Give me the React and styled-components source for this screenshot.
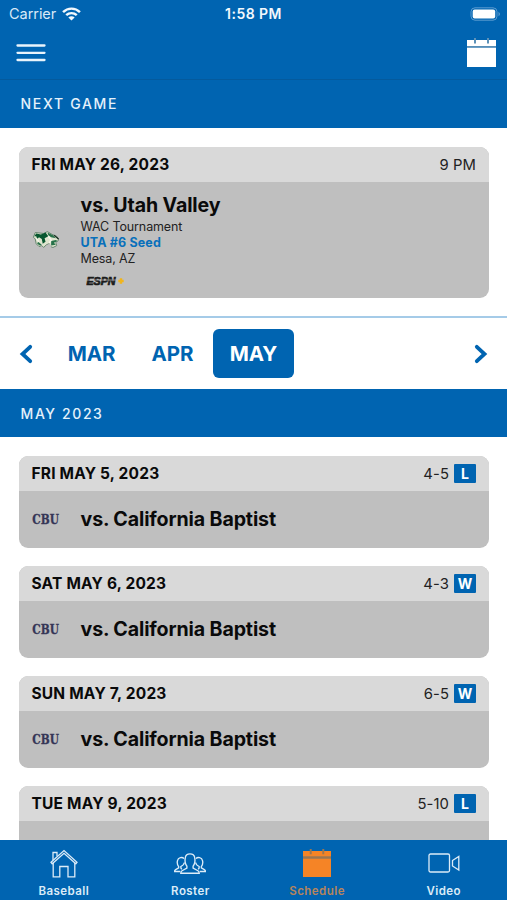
import styled, { createGlobalStyle } from "styled-components";

const GlobalStyle = createGlobalStyle`
  :root {
    --color-primary: #0064b1;
    --color-accent: #f58426;
    --color-head: #d9d9d9;
    --color-body: #bfbfbf;
  }

  * {
    box-sizing: border-box;
  }

  body {
    margin: 0;
    background-color: #fff;
    font-family: Inter, "Liberation Sans", sans-serif;
    color: #0a0a0a;
  }
`;

const Screen = styled.div`
  width: 507px;
  height: 900px;
  display: flex;
  flex-direction: column;
  overflow: hidden;
`;

const StatusBar = styled.div`
  height: 27px;
  flex-shrink: 0;
  display: grid;
  grid-template-columns: 1fr auto 1fr;
  align-items: center;
  padding: 0 6px 0 9px;
  background-color: var(--color-primary);
  color: #fff;
`;

const Carrier = styled.div`
  display: flex;
  align-items: center;
  gap: 5.5px;
  color: #d8e9f7;
  font-size: 14.5px;
  line-height: 27px;
  letter-spacing: -0.05px;
`;

const Clock = styled.div`
  color: #f2f8fd;
  font-size: 14px;
  font-weight: 600;
  letter-spacing: 0.45px;
  margin-right: 3px;
`;

const BatteryIcon = styled.svg`
  justify-self: end;
`;

const NavBar = styled.header`
  height: 53px;
  flex-shrink: 0;
  display: flex;
  justify-content: space-between;
  align-items: flex-start;
  padding: 11px 11px 0 16px;
  background-color: var(--color-primary);
  border-bottom: 1px solid #045a9d;
`;

const MenuIcon = styled.svg`
  margin-top: 5px;
`;

const SectionTitle = styled.h2`
  height: 48px;
  flex-shrink: 0;
  margin: 0;
  padding-left: 20.5px;
  background-color: var(--color-primary);
  color: #e4f1fb;
  font-size: 14px;
  font-weight: 500;
  line-height: ${(props) => (props.$month ? "49px" : "48px")};
  letter-spacing: ${(props) => (props.$month ? "1.6px" : "1.7px")};
`;

const NextGame = styled.section`
  height: 190px;
  flex-shrink: 0;
  padding: 19px 18.5px 0 19px;
  border-bottom: 2px solid #a5cbe8;
`;

const GameList = styled.section`
  flex: 1;
  min-height: 0;
  overflow: hidden;
  display: flex;
  flex-direction: column;
  gap: 18.5px;
  padding: 19.4px 18.5px 0 19px;
`;

const Card = styled.article`
  flex-shrink: 0;
  overflow: hidden;
  border-radius: 9px;
  background-color: var(--color-body);
`;

const CardHead = styled.div`
  height: 35px;
  display: flex;
  align-items: center;
  justify-content: space-between;
  padding: 0 12.5px;
  background-color: var(--color-head);
`;

const GameDate = styled.span`
  padding-top: 0.4px;
  font-size: 15.5px;
  font-weight: 700;
  line-height: 20px;
  letter-spacing: 0.19px;
`;

const Score = styled.span`
  display: flex;
  align-items: center;
  gap: 5px;
  color: #222;
  font-size: 14.8px;
  letter-spacing: 0.1px;
`;

const Result = styled.span`
  width: 22px;
  height: 19px;
  border-radius: 1px;
  background-color: var(--color-primary);
  color: #fff;
  font-size: 14px;
  font-weight: 700;
  line-height: 20px;
  text-align: center;
  letter-spacing: 0;
`;

const CardBody = styled.div`
  height: ${(props) => (props.$tall ? "116px" : "56.5px")};
  display: grid;
  grid-template-columns: 61.5px 1fr;
  align-items: ${(props) => (props.$tall ? "start" : "center")};
`;

const TeamLogo = styled.div`
  align-self: center;
  height: 20px;
  padding-left: 13px;

  svg {
    display: block;
    overflow: visible;
  }
`;

const Details = styled.div`
  padding-top: 9.5px;
`;

const Opponent = styled.h3`
  margin: 0;
  font-size: 19.6px;
  font-weight: 700;
  line-height: 27px;
  letter-spacing: -0.12px;
`;

const Detail = styled.div`
  color: ${(props) => (props.$highlight ? "#0870bb" : "#222")};
  font-size: 12.5px;
  font-weight: ${(props) => (props.$highlight ? 700 : 400)};
  line-height: 16px;
  letter-spacing: ${(props) => (props.$highlight ? "0.15px" : "-0.12px")};
`;

const Network = styled.svg`
  display: block;
  margin: 7px 0 0 5px;
`;

const MonthBar = styled.nav`
  height: 71px;
  flex-shrink: 0;
  display: flex;
  align-items: center;
  padding: 0 19px;
`;

const Months = styled.div`
  flex: 1;
  display: flex;
  padding-left: 18px;
`;

const Month = styled.button`
  width: 81px;
  height: 49px;
  padding: 0;
  border: 0;
  border-radius: 6px;
  background-color: ${(props) =>
    props.$active ? "var(--color-primary)" : "transparent"};
  color: ${(props) => (props.$active ? "#fff" : "var(--color-primary)")};
  font-family: inherit;
  font-size: 20.5px;
  font-weight: 700;
  line-height: 50px;
  letter-spacing: -0.1px;
`;

const TabBar = styled.nav`
  height: 60.5px;
  flex-shrink: 0;
  display: grid;
  grid-template-columns: repeat(4, 1fr);
  padding-left: 0.5px;
  background-color: var(--color-primary);
`;

const Tab = styled.div`
  display: flex;
  flex-direction: column;
  align-items: center;
  padding-top: 9px;
  color: ${(props) => (props.$active ? "#b8845c" : "#dcecf8")};
  font-size: 11.5px;
  font-weight: 600;
  line-height: 14px;
  letter-spacing: 0.45px;

  svg {
    display: block;
    margin-bottom: 6px;
  }
`;

const games = [
  { date: "FRI MAY 5, 2023", score: "4-5", result: "L" },
  { date: "SAT MAY 6, 2023", score: "4-3", result: "W" },
  { date: "SUN MAY 7, 2023", score: "6-5", result: "W" },
  { date: "TUE MAY 9, 2023", score: "5-10", result: "L" },
];

const Calendar = ({ width, height, color, line }) => (
  <svg width={width} height={height} viewBox="0 0 29 30">
    <path d="M0 2H29V8H0Z M0 9.5H29V29H0Z" fill={color} />
    <path d="M0 8.8H29" stroke={line} strokeWidth="1.5" />
    <path d="M8 0V5.5M21 0V5.5" stroke={line} strokeWidth="2" />
  </svg>
);

const Wifi = () => (
  <svg width="19" height="14" viewBox="0 0 18 14" preserveAspectRatio="none">
    <g fill="none" stroke="#f2f8fd" strokeWidth="2.3">
      <path d="M1 5.1C5.5 .5 12.5 .5 17 5.1" />
      <path d="M4 8.2C6.9 5.4 11.1 5.4 14 8.2" />
    </g>
    <path d="M6 10.4C7.7 8.8 10.3 8.8 12 10.4L9 13.5Z" fill="#f2f8fd" />
  </svg>
);

const Wolverine = () => (
  <svg width="28" height="20" viewBox="-1.5 -0.5 30 21">
    <path
      d="M2 2L11 3L15 1L20 4L25 6L27 10L24 13L25 16L21 18L18 17L17 14L14 15L11 18L9 16L6 17L3 14L2 9L0 7Z"
      fill="#dfe5cf"
      stroke="#5f8068"
      strokeWidth="1"
    />
    <path
      d="M3 3L8 4L13 2L16 6L12 8L13 12L10 14L9 9L6 7L4 9L3 6L1 6Z"
      fill="#07572f"
    />
    <path
      d="M15 2L21 5L24 8L19 7L16 5Z M19 11L24 10L26 11L22 13L24 15L19 16Z M5 12L9 15L7 16L4 14Z"
      fill="#27724a"
    />
    <path d="M16 6L19 10L17 13M3 8L6 12" fill="none" stroke="#f5f6ea" strokeWidth="1.5" />
    <path d="M22 5L27 9" stroke="#1b2f23" strokeWidth="1.3" />
    {/* open jaw */}
    <path d="M14 20L15 15L18 14L19 18L17 20Z" fill="#bfbfbf" />
  </svg>
);

const Cbu = () => (
  <svg width="30" height="20" viewBox="0 0 30 20">
    <text
      x="0.3"
      y="14"
      textLength="26.6"
      lengthAdjust="spacingAndGlyphs"
      fontFamily="DejaVu Serif, serif"
      fontSize="12.5"
      fontWeight="700"
      fill="#343556"
      stroke="#343556"
      strokeWidth="0.3"
    >
      CBU
    </text>
  </svg>
);

const EspnPlus = () => (
  <Network width="40" height="13" viewBox="0 -1 40 13">
    <text
      x="0.5"
      y="9.7"
      textLength="29"
      lengthAdjust="spacingAndGlyphs"
      fontFamily="Liberation Sans, sans-serif"
      fontSize="10"
      fontWeight="700"
      fontStyle="italic"
      fill="#1c1c1c"
      stroke="#1c1c1c"
      strokeWidth="0.7"
    >
      ESPN
    </text>
    <path d="M1 5H30" stroke="#bfbfbf" strokeWidth="0.7" />
    <path d="M35 3.3V8.7M32.3 6H37.7" stroke="#f1b51c" strokeWidth="2.4" />
  </Network>
);

const Chevron = ({ d }) => (
  <svg width="14" height="20" viewBox="0 0 14 20">
    <path
      d={d}
      fill="none"
      stroke="#0064b1"
      strokeWidth="3.8"
      strokeLinecap="round"
    />
  </svg>
);

const HouseIcon = () => (
  <svg width="28" height="29" viewBox="0 0 28 29" fill="none" stroke="#dcecf8" strokeWidth="1.3">
    <path d="M1 13.2L14 1.5L27 13.2L25.8 14.7L14 4.3L2.2 14.7Z" />
    <path d="M3 11V3.5H7V7.3M3.2 14V27.8H9.8V17.5H18V27.8H24.8V14" />
  </svg>
);

const RosterIcon = () => (
  <svg width="32" height="29" viewBox="0.5 0 33 29" fill="none" stroke="#dcecf8" strokeWidth="1.4">
    <path d="M13.8 17.2C11.7 14.5 11.6 11 12.2 8.2C13 3.4 21 3.4 21.8 8.2C22.4 11 22.3 14.5 20.2 17.2V19.3L25.2 22C26 22.5 26.5 23.5 26.5 24.5H7.5C7.5 23.5 8 22.5 8.8 22L13.8 19.3Z" />
    <path d="M10.8 9.5C9.2 7.5 4.8 8.1 4.1 11.5C3.6 13.5 4.1 16.2 5.3 17.7V19.1L2.2 20.8Q1 21.5 1 22.7H7M8.5 20.5L7.6 19.1V17.6C9.5 16.7 11 15.5 11.2 13.5" />
    <path d="M23.2 9.5C24.8 7.5 29.2 8.1 29.9 11.5C30.4 13.5 29.9 16.2 28.7 17.7V19.1L31.8 20.8Q33 21.5 33 22.7H27M25.5 20.5L26.4 19.1V17.6C24.5 16.7 23 15.5 22.8 13.5" />
  </svg>
);

const VideoIcon = () => (
  <svg width="32" height="29" viewBox="0 0 32 29" fill="none" stroke="#dcecf8" strokeWidth="1.3">
    <rect x="1" y="5" width="20.5" height="18" rx="1.5" />
    <path d="M24.5 11.5L30.8 7.5V21L24.5 17Z" />
  </svg>
);

const App = () => {
  return (
    <>
      <GlobalStyle />
      <Screen>
        <StatusBar>
          <Carrier>
            Carrier
            <Wifi />
          </Carrier>
          <Clock>1:58 PM</Clock>
          <BatteryIcon width="31" height="14" viewBox="0 0 31 14">
            <rect x="1" y="0.8" width="26" height="12.4" rx="4" fill="none" stroke="#5b9bd0" />
            <rect x="2.7" y="2.6" width="22.5" height="8.8" rx="2" fill="#fff" />
            <path d="M28.5 4.7Q31.5 7 28.5 9.3Z" fill="#5b9bd0" />
          </BatteryIcon>
        </StatusBar>
        <NavBar>
          <MenuIcon width="30" height="20" viewBox="0 0 30 20">
            <path
              d="M1.5 2.5H28.5M1.5 9.8H28.5M1.5 17H28.5"
              stroke="#e9f4fc"
              strokeWidth="2.3"
              strokeLinecap="round"
            />
          </MenuIcon>
          <Calendar width={29} height={30} color="#fff" line="#5c91b8" />
        </NavBar>

        <SectionTitle>NEXT GAME</SectionTitle>
        <NextGame>
          <Card>
            <CardHead>
              <GameDate>FRI MAY 26, 2023</GameDate>
              <Score>9 PM</Score>
            </CardHead>
            <CardBody $tall>
              <TeamLogo>
                <Wolverine />
              </TeamLogo>
              <Details>
                <Opponent>vs. Utah Valley</Opponent>
                <Detail>WAC Tournament</Detail>
                <Detail $highlight>UTA #6 Seed</Detail>
                <Detail>Mesa, AZ</Detail>
                <EspnPlus />
              </Details>
            </CardBody>
          </Card>
        </NextGame>

        <MonthBar>
          <Chevron d="M11.2 2.8L3.5 10L11.2 17.2" />
          <Months>
            <Month>MAR</Month>
            <Month>APR</Month>
            <Month $active>MAY</Month>
          </Months>
          <Chevron d="M2.8 2.8L10.5 10L2.8 17.2" />
        </MonthBar>

        <SectionTitle $month>MAY 2023</SectionTitle>
        <GameList>
          {games.map((game) => (
            <Card key={game.date}>
              <CardHead>
                <GameDate>{game.date}</GameDate>
                <Score>
                  {game.score}
                  <Result>{game.result}</Result>
                </Score>
              </CardHead>
              <CardBody>
                <TeamLogo>
                  <Cbu />
                </TeamLogo>
                <Opponent>vs. California Baptist</Opponent>
              </CardBody>
            </Card>
          ))}
        </GameList>

        <TabBar>
          <Tab>
            <HouseIcon />
            Baseball
          </Tab>
          <Tab>
            <RosterIcon />
            Roster
          </Tab>
          <Tab $active>
            <Calendar width={28} height={29} color="var(--color-accent)" line="#9a7650" />
            Schedule
          </Tab>
          <Tab>
            <VideoIcon />
            Video
          </Tab>
        </TabBar>
      </Screen>
    </>
  );
};

export default App;
